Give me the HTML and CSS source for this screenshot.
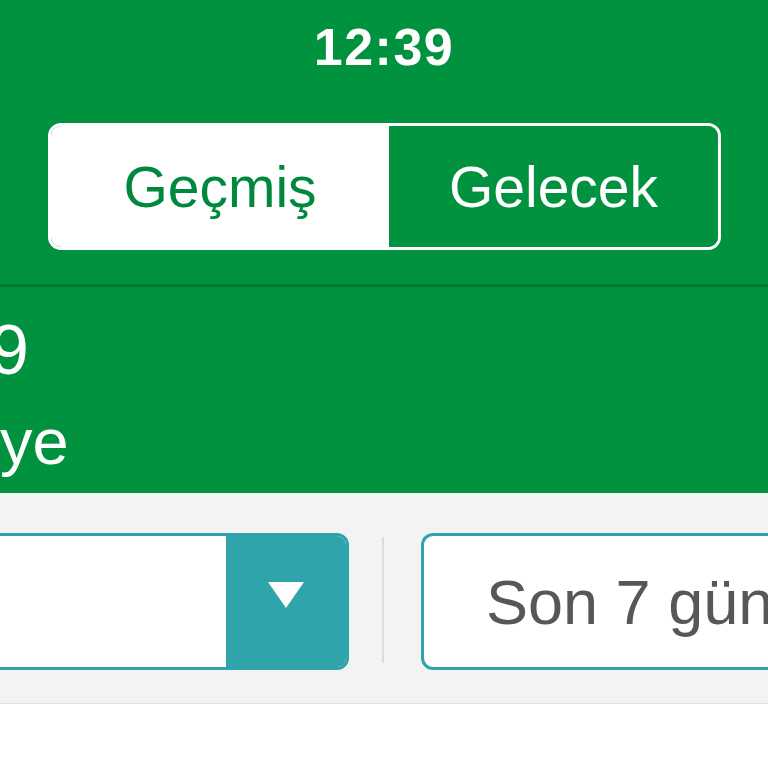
FILE: index.html
```html
<!DOCTYPE html>
<html lang="tr">
<head>
<meta charset="utf-8">
<title>Geçmiş / Gelecek</title>
<link rel="stylesheet" href="styles.css">
</head>
<body>
<div class="screen">
  <header class="header">
    <div class="status">12:39</div>
    <div class="segment">
      <div class="seg seg-active">Geçmiş</div>
      <div class="seg seg-off">Gelecek</div>
    </div>
  </header>
  <section class="summary">
    <div class="big">9</div>
    <div class="sub">ye</div>
  </section>
  <section class="filters">
    <div class="select">
      <div class="select-field"></div>
      <div class="select-btn"><span class="caret"></span></div>
    </div>
    <div class="sep"></div>
    <div class="range">Son 7 gün</div>
  </section>
  <div class="content"></div>
</div>
</body>
</html>
```

FILE: styles.css
```css
html, body {
  margin: 0;
  padding: 0;
  background: #ffffff;
}
body {
  font-family: "Liberation Sans", Arial, sans-serif;
}
.screen {
  width: 768px;
  height: 768px;
  overflow: hidden;
}
.header {
  background: #00923f;
  padding-top: 21px;
  padding-bottom: 34px;
  border-bottom: 3px solid #007a31;
}
.status {
  color: #ffffff;
  font-weight: bold;
  font-size: 52px;
  line-height: 52px;
  text-align: center;
  letter-spacing: 1.5px;
}
.segment {
  margin: 50px 47px 0 48px;
  height: 127px;
  box-sizing: border-box;
  border: 3px solid #ffffff;
  border-radius: 13px;
  display: flex;
  overflow: hidden;
}
.seg {
  display: flex;
  align-items: center;
  justify-content: center;
  font-size: 57px;
}
.seg-active {
  flex: 0 0 338px;
  background: #ffffff;
  color: #00893c;
}
.seg-off {
  flex: 1;
  background: #00923f;
  color: #ffffff;
}
.summary {
  background: #00923f;
  height: 206px;
  box-sizing: border-box;
  padding-top: 23px;
  color: #ffffff;
}
.big {
  font-size: 70px;
  line-height: 80px;
  margin-left: -10px;
}
.sub {
  font-size: 65px;
  line-height: 80px;
  margin-top: 12px;
  margin-left: 0;
}
.filters {
  background: #f3f3f4;
  height: 211px;
  box-sizing: border-box;
  padding-top: 40px;
  border-bottom: 1px solid #e2e2e4;
  display: flex;
  align-items: flex-start;
}
.select {
  flex: 0 0 400px;
  margin-left: -51px;
  height: 137px;
  box-sizing: border-box;
  border: 3px solid #2fa4aa;
  border-radius: 12px;
  display: flex;
  overflow: hidden;
  background: #ffffff;
}
.select-field {
  flex: 1;
  background: #ffffff;
}
.select-btn {
  flex: 0 0 120px;
  background: #2fa4aa;
  display: flex;
  align-items: center;
  justify-content: center;
}
.caret {
  width: 0;
  height: 0;
  border-left: 18px solid transparent;
  border-right: 18px solid transparent;
  border-top: 26px solid #ffffff;
  margin-bottom: 13px;
}
.sep {
  flex: 0 0 2px;
  height: 126px;
  margin: 4px 0 0 33px;
  background: #dcdcde;
}
.range {
  flex: 0 0 420px;
  margin-left: 37px;
  height: 137px;
  box-sizing: border-box;
  border: 3px solid #2fa4aa;
  border-radius: 12px;
  background: #ffffff;
  display: flex;
  align-items: center;
  padding-left: 62px;
  font-size: 63px;
  color: #575757;
  white-space: nowrap;
}
.content {
  background: #ffffff;
  height: 100px;
}
```
